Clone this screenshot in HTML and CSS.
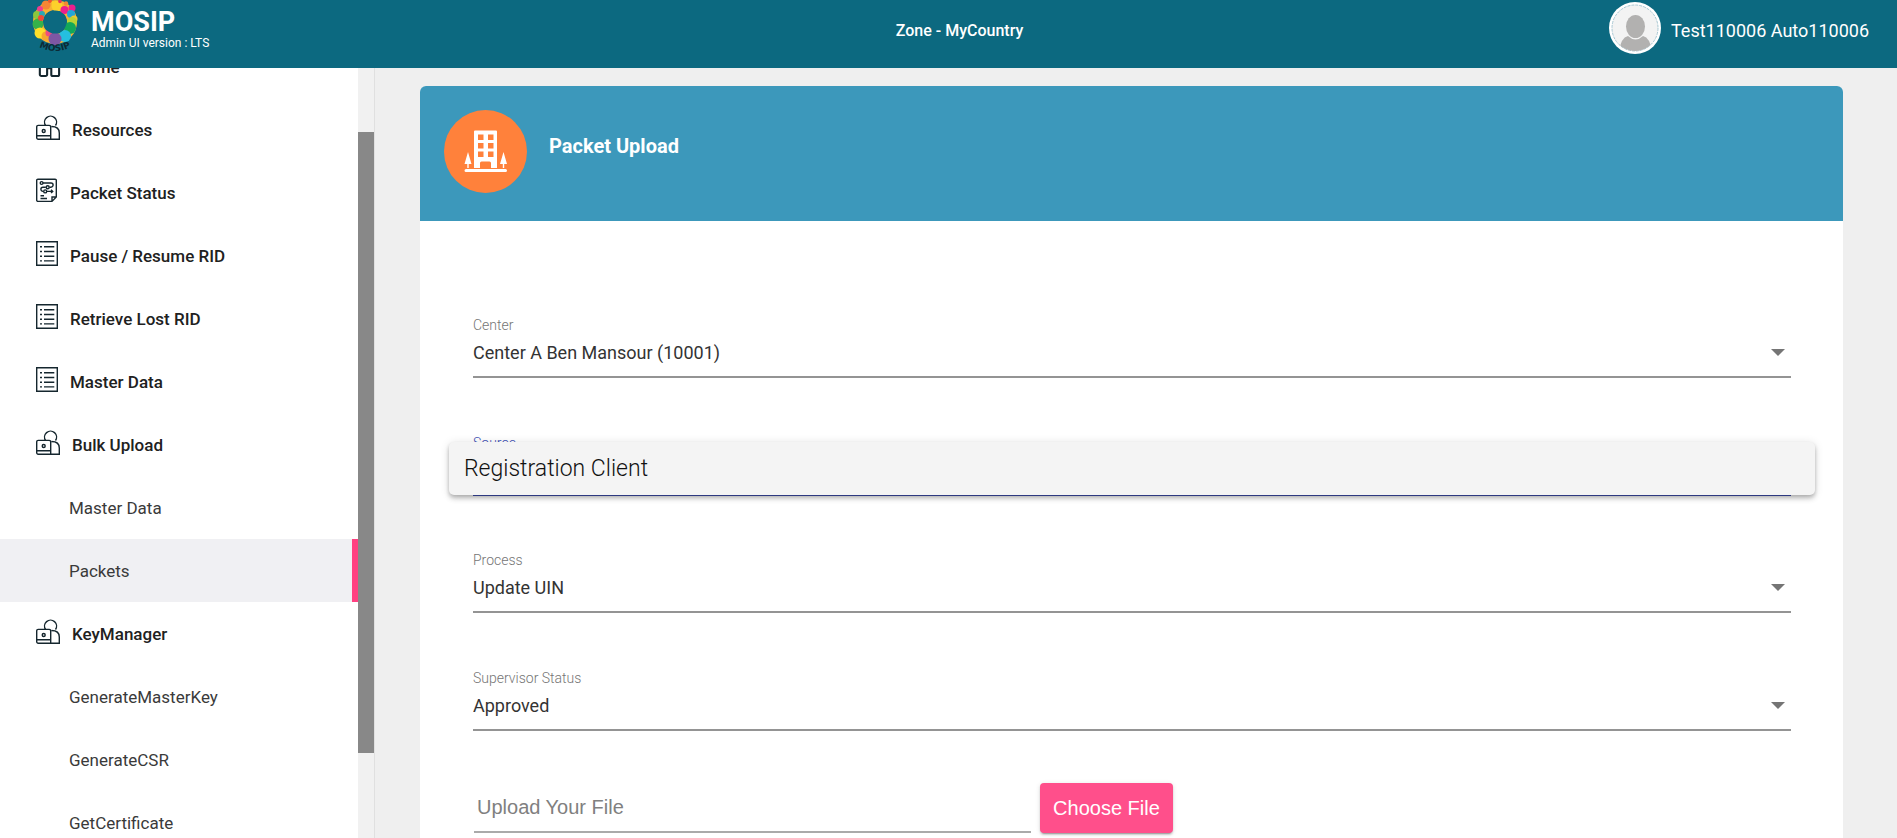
FILE: index.html
```html
<!DOCTYPE html>
<html lang="en">
<head>
<meta charset="utf-8">
<title>MOSIP Admin - Packet Upload</title>
<link rel="stylesheet" href="styles.css">
</head>
<body>
<svg class="sprite" aria-hidden="true">
  <symbol id="icon-home" viewBox="0 0 24 24"><path d="M3.200 10.500V21.500a1.500 1.500 0 0 0 1.500 1.500h4a1.500 1.500 0 0 0 1.500-1.500v-6h4v6a1.500 1.500 0 0 0 1.500 1.500h4.500a1.500 1.500 0 0 0 1.500-1.500V10.500M1 11.500 12 2 23 11.500"/></symbol>
  <symbol id="icon-resource" viewBox="0 0 24 25"><path d="M9.600 10.500A6 6 0 1 1 19.500 10.500M15.500 11.500c5 0 7.800 2 7.800 6.500v6.200H2.200A1.500 1.500 0 0 1 .7 22.700V11.900a1.500 1.500 0 0 1 1.500-1.500H13.200a1.500 1.500 0 0 1 1.500 1.500V24M.7 20.800H14.700"/><circle cx="7.700" cy="16" r="1.500"/></symbol>
  <symbol id="icon-packet" viewBox="0 0 22 24"><path d="M16 22.900H2A1.200 1.200 0 0 1 .7 21.700V2A1.200 1.200 0 0 1 2 .7H19A1.200 1.200 0 0 1 20.300 2V18.500ZM16 22.500V18.500H20.300M7 4.500H15a2 2 0 0 1 0 4.200H13.500M9.800 8.700H7a2 2 0 0 0 0 4.200H7.500M11 12.900H16.500M4.500 17.200H8M4.500 20H11"/><circle cx="5.600" cy="4.500" r="1.400"/><circle cx="11.700" cy="8.700" r="1.500"/><circle cx="9.200" cy="12.900" r="1.500"/><path d="m15 11.300 1.700 1.600-1.700 1.600"/></symbol>
  <symbol id="icon-list" viewBox="0 0 22 25"><path d="M.7.7H21.300V24.200H.7ZM8 5.800H18.300M8 10.500H18.300M8 15.200H18.300M8 19.900H18.300M4 5.800H6M4 10.500H6M4 15.200H6M4 19.900H6"/></symbol>
</svg>

<header class="topbar">
  <a class="brand" href="#">
    <svg class="brand-logo" viewBox="0 0 46 52" aria-hidden="true">
      <circle cx="23" cy="22" r="17" fill="none" stroke="#f6b233" stroke-width="10"/>
      <circle cx="14" cy="5" r="4.500" fill="#f58634"/><circle cx="25" cy="6" r="5.500" fill="#fdd12b"/>
      <circle cx="18" cy="1" r="2" fill="#f0572d"/><circle cx="21" cy="2.500" r="1.500" fill="#fdd12b"/><circle cx="28" cy="1.500" r="1.800" fill="#e8375b"/><circle cx="34" cy="3.500" r="2.200" fill="#f58634"/>
      <circle cx="32.500" cy="10" r="4" fill="#ec1f8d"/><circle cx="40" cy="8" r="3.500" fill="#ec1f8d"/>
      <circle cx="39" cy="14" r="4" fill="#22a6d8"/><circle cx="42" cy="19" r="3.500" fill="#f2c82e"/>
      <circle cx="8" cy="9" r="3" fill="#ee3d8f"/><circle cx="5" cy="15" r="4" fill="#8cc63e"/>
      <circle cx="10" cy="14" r="3" fill="#2ba7b5"/><circle cx="6" cy="24" r="5.500" fill="#36b24a"/>
      <circle cx="9" cy="18" r="3" fill="#ee4a38"/><circle cx="8" cy="33" r="5.500" fill="#fde02a"/>
      <circle cx="14" cy="36" r="4.500" fill="#f5a62f"/><circle cx="17" cy="33" r="3.500" fill="#ef4c7e"/>
      <circle cx="40" cy="22" r="5" fill="#b8d334"/><circle cx="38" cy="28" r="6" fill="#12a85a"/>
      <circle cx="33" cy="36" r="6" fill="#25bfe0"/><circle cx="23" cy="39" r="6.500" fill="#7d57a4"/>
      <circle cx="23" cy="22" r="11.500" fill="#0c6980"/>
      <path id="logo-arc" d="M5 46Q23 56 41 46" fill="none"/>
      <text class="brand-logo-text"><textPath href="#logo-arc" startOffset="50%">MOSIP</textPath></text>
    </svg>
    <span class="brand-text">
      <span class="brand-name">MOSIP</span>
      <span class="brand-version">Admin UI version : LTS</span>
    </span>
  </a>
  <p class="zone">Zone - MyCountry</p>
  <div class="user">
    <svg class="avatar" viewBox="0 0 52 52" aria-hidden="true">
      <clipPath id="avatar-clip"><circle cx="26" cy="26" r="23"/></clipPath>
      <circle cx="26" cy="26" r="26" fill="#fff"/>
      <circle cx="26" cy="26" r="23" fill="#f3f3f3" stroke="#a9c8d3" stroke-dasharray="3 1"/>
      <g clip-path="url(#avatar-clip)" fill="#b2b1b0"><ellipse cx="26.500" cy="24.500" rx="9.500" ry="11.500"/><path d="M10 52Q11 36 19 34 26.500 41 34 34 42 36 43 52Z"/></g>
    </svg>
    <span class="user-name">Test110006 Auto110006</span>
  </div>
</header>

<div class="shell">
  <aside class="sidebar">
    <nav class="menu" aria-label="Main menu">
      <a class="menu-item" href="#"><svg class="menu-icon icon-home"><use href="#icon-home"/></svg>Home</a>
      <a class="menu-item" href="#"><svg class="menu-icon icon-wide"><use href="#icon-resource"/></svg>Resources</a>
      <a class="menu-item" href="#"><svg class="menu-icon"><use href="#icon-packet"/></svg>Packet Status</a>
      <a class="menu-item" href="#"><svg class="menu-icon"><use href="#icon-list"/></svg>Pause / Resume RID</a>
      <a class="menu-item" href="#"><svg class="menu-icon"><use href="#icon-list"/></svg>Retrieve Lost RID</a>
      <a class="menu-item" href="#"><svg class="menu-icon"><use href="#icon-list"/></svg>Master Data</a>
      <a class="menu-item" href="#"><svg class="menu-icon icon-wide"><use href="#icon-resource"/></svg>Bulk Upload</a>
      <a class="menu-item sub" href="#">Master Data</a>
      <a class="menu-item sub active" href="#" aria-current="page">Packets</a>
      <a class="menu-item" href="#"><svg class="menu-icon icon-wide"><use href="#icon-resource"/></svg>KeyManager</a>
      <a class="menu-item sub" href="#">GenerateMasterKey</a>
      <a class="menu-item sub" href="#">GenerateCSR</a>
      <a class="menu-item sub" href="#">GetCertificate</a>
    </nav>
    <div class="scroll-track"><div class="scroll-thumb"></div></div>
  </aside>

  <main class="content">
    <section class="card">
      <div class="card-head">
        <svg class="card-icon" viewBox="0 0 83 83" aria-hidden="true">
          <circle cx="41.500" cy="41.500" r="41.500" fill="#ff813b"/>
          <path fill="#fff" fill-rule="evenodd" d="M31 20.500H52a1 1 0 0 1 1 1V58H47V53a1.500 1.500 0 0 0-1.500-1.500H37.500A1.500 1.500 0 0 0 36 53V58H30V21.500a1 1 0 0 1 1-1ZM34 24.500V30H39.500V24.500ZM44 24.500V30H49.500V24.500ZM34 33V38.500H39.500V33ZM44 33V38.500H49.500V33ZM34 41.500V47H39.500V41.500ZM44 41.500V47H49.500V41.500Z"/>
          <path fill="#fff" d="M24 42 27.500 54H24.700V58H23.300V54H20.500ZM59.500 42 63 54H60.200V58H58.800V54H56ZM22 59H61.500a1.500 1.500 0 0 1 0 3H22a1.500 1.500 0 0 1 0-3Z"/>
        </svg>
        <h1 class="card-title">Packet Upload</h1>
      </div>
      <form class="form">
        <div class="field">
          <label class="field-label" for="center">Center</label>
          <select class="field-select" id="center"><option>Center A Ben Mansour (10001)</option></select>
        </div>
        <div class="field focused">
          <label class="field-label" for="source">Source</label>
          <select class="field-select" id="source"><option>Registration Client</option></select>
          <div class="options" role="listbox" aria-label="Source">
            <div class="option" role="option" aria-selected="false">Registration Client</div>
          </div>
        </div>
        <div class="field">
          <label class="field-label" for="process">Process</label>
          <select class="field-select" id="process"><option>Update UIN</option></select>
        </div>
        <div class="field">
          <label class="field-label" for="status">Supervisor Status</label>
          <select class="field-select" id="status"><option>Approved</option></select>
        </div>
        <div class="upload">
          <input class="upload-name" type="text" placeholder="Upload Your File" aria-label="Upload Your File">
          <button class="upload-button" type="button">Choose File</button>
        </div>
      </form>
    </section>
  </main>
</div>
</body>
</html>
```

FILE: styles.css
```css
* {
  box-sizing: border-box;
}

body {
  margin: 0;
  height: 100vh;
  display: flex;
  flex-direction: column;
  overflow: hidden;
  background: #efefef;
  color: #212121;
  font-family: Roboto, "Liberation Sans", sans-serif;
}

a {
  color: inherit;
  text-decoration: none;
}

.sprite {
  display: none;
}

/* Top bar */
.topbar {
  flex: none;
  height: 68px;
  display: grid;
  grid-template-columns: 1fr auto 1fr;
  padding: 0 28px 0 32px;
  background: #0c6980;
  color: #fff;
}

.brand {
  display: flex;
  gap: 13px;
}

.brand-logo {
  width: 46px;
  height: 52px;
}

.brand-logo-text {
  font: 700 9px "DejaVu Sans", sans-serif;
  fill: #0b2a35;
  text-anchor: middle;
}

.brand-text {
  display: flex;
  flex-direction: column;
  padding-top: 9px;
}

.brand-name {
  font-size: 27px;
  line-height: 27px;
  font-weight: 700;
}

.brand-version {
  font-size: 12px;
  line-height: 14px;
}

.zone {
  margin: 0;
  padding-left: 18px;
  font-size: 16px;
  line-height: 61px;
  font-weight: 500;
}

.user {
  justify-self: end;
  display: flex;
  gap: 10px;
  padding-top: 2px;
}

.avatar {
  width: 52px;
  height: 52px;
}

.user-name {
  font-size: 18px;
  line-height: 57px;
}

/* Sidebar */
.shell {
  flex: 1;
  min-height: 0;
  display: flex;
}

.sidebar {
  flex: none;
  width: 375px;
  display: flex;
  overflow: hidden;
  border-right: 1px solid #e0e0e0;
  background: #fff;
}

.menu {
  flex: 1;
  margin-top: -33px;
}

.menu-item {
  display: flex;
  align-items: center;
  gap: 12px;
  height: 63px;
  padding-left: 36px;
  font-size: 17px;
  font-weight: 500;
}

.menu-icon {
  width: 22px;
  height: 25px;
  margin-bottom: 4px;
  fill: none;
  stroke: #15262e;
  stroke-width: 1.4;
}

.icon-wide {
  width: 24px;
}

.icon-home {
  width: 26px;
  stroke-width: 2;
}

.menu-item.sub {
  padding-left: 69px;
  color: #3a3a3a;
  font-weight: 400;
}

.menu-item.active {
  border-right: 6px solid #ff4081;
  background: #f0f0f3;
}

.scroll-track {
  width: 16px;
  padding-top: 64px;
  background: #f1f1f1;
}

.scroll-thumb {
  height: 88%;
  background: #888;
}

/* Card */
.content {
  flex: 1;
  min-width: 0;
  padding: 18px 54px 0 45px;
}

.card {
  min-height: 100%;
  border-radius: 6px;
  background: #fff;
}

.card-head {
  display: flex;
  gap: 22px;
  height: 135px;
  padding: 24px;
  border-radius: 6px 6px 0 0;
  background: #3c98bb;
  color: #fff;
}

.card-icon {
  width: 83px;
  height: 83px;
}

.card-title {
  margin: 0;
  padding-top: 23px;
  font-size: 20px;
  line-height: 26px;
  font-weight: 700;
}

.form {
  padding: 94px 52px 40px 53px;
}

.field {
  position: relative;
  height: 63px;
  margin-bottom: 55px;
  border-bottom: 2px solid #949494;
}

.field-label {
  display: block;
  font-size: 14px;
  line-height: 20px;
  font-weight: 300;
  color: #757575;
}

.field-select {
  display: block;
  width: 100%;
  height: 34px;
  border: 0;
  padding: 0;
  appearance: none;
  background: transparent;
  color: #333;
  font: 400 18px Roboto, sans-serif;
}

.field::after {
  content: "";
  position: absolute;
  right: 6px;
  top: 34px;
  border: 7px solid transparent;
  border-top-color: #757575;
  border-bottom: 0;
  pointer-events: none;
}

.focused {
  margin-bottom: 54px;
  border-bottom-color: #3f51b5;
}

.focused .field-label {
  color: #3f51b5;
}

.options {
  position: absolute;
  z-index: 1;
  top: 9px;
  left: -24px;
  right: -24px;
  border-radius: 5px;
  background: #f4f4f4;
  box-shadow: 0 2px 4px -1px rgba(0, 0, 0, .2), 0 4px 5px rgba(0, 0, 0, .14), 0 1px 10px rgba(0, 0, 0, .12);
}

.option {
  padding: 0 15px;
  color: #111;
  font-size: 23px;
  line-height: 53px;
  font-weight: 300;
}

.upload {
  display: flex;
  align-items: flex-start;
  gap: 9px;
  padding-left: 1px;
  margin-top: -3px;
}

.upload-name {
  width: 42.3%;
  height: 50px;
  border: 0;
  border-bottom: 2px solid #aaa;
  padding: 0 3px;
  background: transparent;
  color: #212121;
  font: 400 20px "Liberation Sans", sans-serif;
}

.upload-name::placeholder {
  color: #808080;
}

.upload-button {
  height: 50px;
  border: 0;
  border-radius: 4px;
  padding: 0 13px;
  background: #ff4f8b;
  color: #fff;
  font: 400 20px "Liberation Sans", sans-serif;
  box-shadow: 0 3px 1px -2px rgba(0, 0, 0, .2), 0 2px 2px rgba(0, 0, 0, .14), 0 1px 5px rgba(0, 0, 0, .12);
}
```
